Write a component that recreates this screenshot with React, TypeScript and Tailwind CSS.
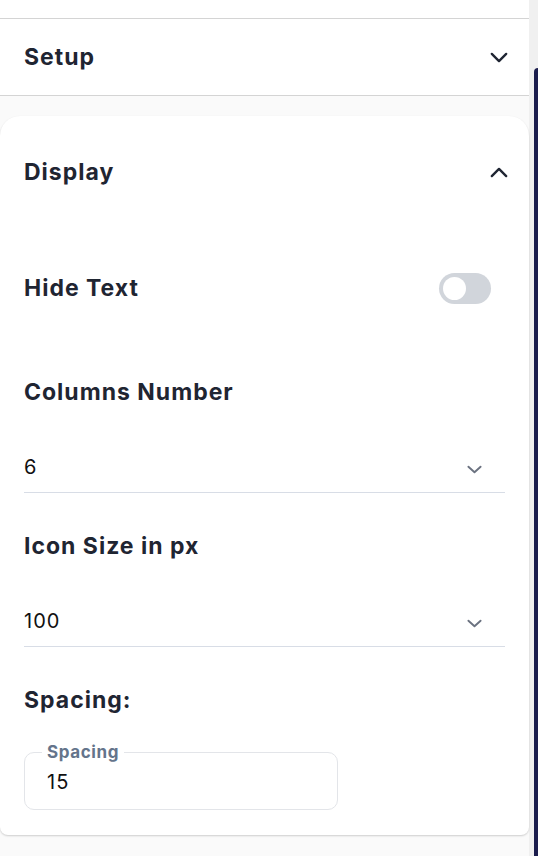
import { useState } from "react";

const Chevron = ({ up, className }: { up?: boolean; className?: string }) => (
  <svg viewBox="0 0 20 12" fill="none" className={className}>
    <path
      d={up ? "M2 10 L10 2 L18 10" : "M2 2 L10 10 L18 2"}
      stroke="currentColor"
      strokeWidth="2.6"
      strokeLinecap="round"
      strokeLinejoin="round"
    />
  </svg>
);

const SelectChevron = () => (
  <svg viewBox="0 0 16 9" fill="none" className="w-[15px] h-[9px] text-[#6b7280]">
    <path d="M1.5 1.5 L8 7.5 L14.5 1.5" stroke="currentColor" strokeWidth="2" strokeLinecap="round" strokeLinejoin="round" />
  </svg>
);

const heading = "text-[23px] font-bold tracking-[1px] text-[#1f2532]";

function SelectField({ label, value }: { label: string; value: string }) {
  return (
    <div>
      <div className={`h-[40px] flex items-center ${heading}`}>{label}</div>
      <div className="h-[81px] flex items-end justify-between pb-[10px] pr-[23px] border-b border-[#d8dde6]">
        <span className="text-[20px] leading-[30px] tracking-[1px] text-[#111]">{value}</span>
        <span className="mb-[8px]"><SelectChevron /></span>
      </div>
    </div>
  );
}

export default function App() {
  const [hideText, setHideText] = useState(false);

  return (
    <div className="w-[538px] h-[856px] flex bg-[#f0f0f0] overflow-hidden" style={{ fontFamily: "Inter, 'Noto Sans', sans-serif" }}>
      <div className="w-[529px] flex flex-col bg-white">
        <div className="h-[19px] border-b border-[#d4d4d4]" />

        {/* Setup */}
        <div className="h-[77px] flex items-center justify-between pl-6 pr-[21px] border-b border-[#d4d4d4] text-[#1f2532]">
          <span className={heading}>Setup</span>
          <Chevron className="w-[18px] h-[11px]" />
        </div>

        <div className="flex-1 flex flex-col bg-[#fafafa] pt-[20px]">
          {/* Display card */}
          <div className="bg-white rounded-t-[20px] rounded-b-[8px] shadow-[0_1px_2px_rgba(0,0,0,0.18)] px-6 pt-[36px] pb-[25px]">
            <div className="h-[40px] flex items-center justify-between text-[#1f2532]">
              <span className={heading}>Display</span>
              <Chevron up className="w-[18px] h-[11px] mr-[-3px]" />
            </div>

            <div className="mt-[76px] h-[40px] flex items-center justify-between">
              <span className={heading}>Hide Text</span>
              <button
                onClick={() => setHideText(!hideText)}
                className={`mr-[14px] w-[52px] h-[31px] rounded-full p-[4px] flex ${hideText ? "bg-[#1b1f4b] justify-end" : "bg-[#d1d5db] justify-start"}`}
              >
                <span className="w-[23px] h-[23px] rounded-full bg-white block" />
              </button>
            </div>

            <div className="mt-[64px]">
              <SelectField label="Columns Number" value="6" />
            </div>
            <div className="mt-[33px]">
              <SelectField label="Icon Size in px" value="100" />
            </div>

            <div className={`mt-[33px] h-[40px] flex items-center ${heading}`}>Spacing:</div>

            <div className="mt-[32px] relative w-[314px] h-[58px] rounded-[10px] border border-[#e3e5e9] flex items-center pl-[22px]">
              <span className="absolute -top-[13px] left-[17px] bg-white px-[5px] text-[17px] font-bold tracking-[0.6px] text-[#64748b] leading-[24px]">Spacing</span>
              <span className="text-[20px] tracking-[1px] text-[#111] mt-[2px]">15</span>
            </div>
          </div>
        </div>
      </div>

      <div className="flex-1 flex flex-col pt-[68px] pl-[5px]">
        <div className="flex-1 bg-[#1b1d4d] rounded-tl-[5px]" />
      </div>
    </div>
  );
}
